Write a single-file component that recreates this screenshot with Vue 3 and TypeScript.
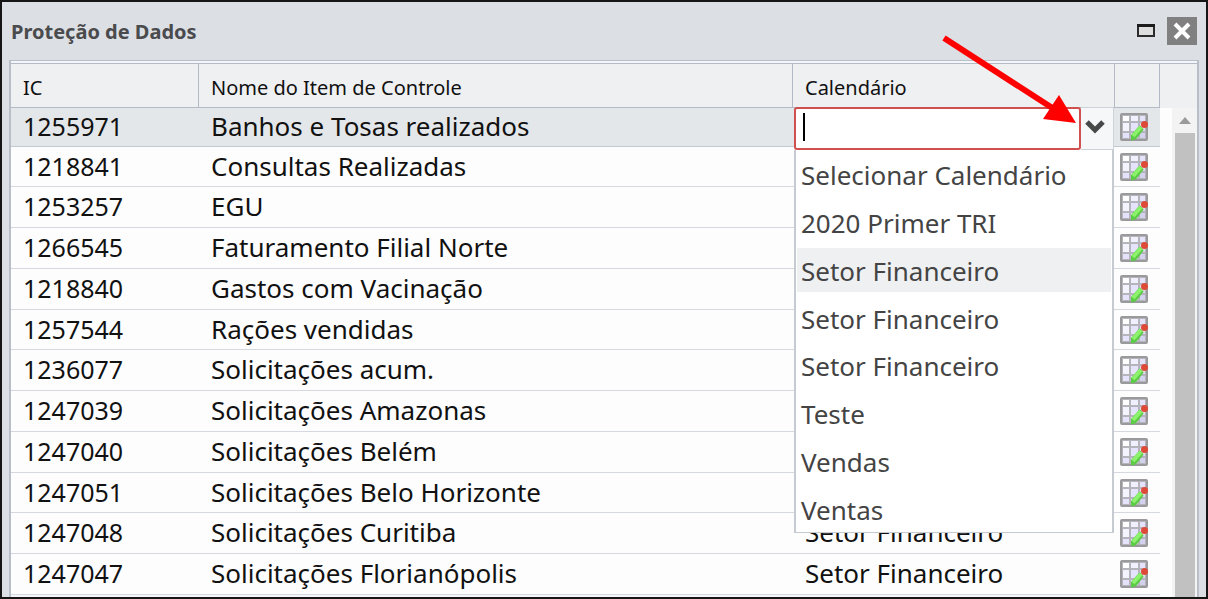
<script setup lang="ts">
import { ref } from 'vue'

interface Item {
  id: string
  name: string
  calendar: string
}

const items: Item[] = [
  { id: '1255971', name: 'Banhos e Tosas realizados', calendar: '' },
  { id: '1218841', name: 'Consultas Realizadas', calendar: '' },
  { id: '1253257', name: 'EGU', calendar: '' },
  { id: '1266545', name: 'Faturamento Filial Norte', calendar: '' },
  { id: '1218840', name: 'Gastos com Vacinação', calendar: '' },
  { id: '1257544', name: 'Rações vendidas', calendar: '' },
  { id: '1236077', name: 'Solicitações acum.', calendar: '' },
  { id: '1247039', name: 'Solicitações Amazonas', calendar: '' },
  { id: '1247040', name: 'Solicitações Belém', calendar: '' },
  { id: '1247051', name: 'Solicitações Belo Horizonte', calendar: '' },
  { id: '1247048', name: 'Solicitações Curitiba', calendar: 'Setor Financeiro' },
  { id: '1247047', name: 'Solicitações Florianópolis', calendar: 'Setor Financeiro' },
]

const options: string[] = [
  'Selecionar Calendário',
  '2020 Primer TRI',
  'Setor Financeiro',
  'Setor Financeiro',
  'Setor Financeiro',
  'Teste',
  'Vendas',
  'Ventas',
]

const query = ref('')
const active = ref(2)
const open = ref(true)

function choose(index: number) {
  query.value = options[index]
  open.value = false
}
</script>

<template>
  <main class="window">
    <header class="titlebar">
      <h1>Proteção de Dados</h1>
      <button class="maximize" type="button" aria-label="Maximizar">
        <svg width="20" height="16" viewBox="0 0 20 16">
          <rect x="2" y="2" width="16" height="11" fill="#dedede" stroke="#2b2b2b" stroke-width="2" />
          <path d="M1 2.5H19" stroke="#1c1c1c" stroke-width="3" />
        </svg>
      </button>
      <button class="close" type="button" aria-label="Fechar">
        <svg width="20" height="20" viewBox="0 0 20 20">
          <path d="M3 3L17 17M17 3L3 17" stroke="#fff" stroke-width="4" />
        </svg>
      </button>
    </header>

    <section class="panel">
      <table>
        <colgroup>
          <col class="col-id" />
          <col />
          <col class="col-calendar" />
          <col class="col-action" />
        </colgroup>
        <thead>
          <tr>
            <th scope="col">IC</th>
            <th scope="col">Nome do Item de Controle</th>
            <th scope="col">Calendário</th>
            <th scope="col"></th>
          </tr>
        </thead>
        <tbody>
          <tr v-for="(item, i) in items" :key="item.id" :class="{ selected: i === 0 }">
            <td class="id">{{ item.id }}</td>
            <td>{{ item.name }}</td>
            <td class="calendar">
              <div v-if="i === 0" class="combo">
                <div class="field">
                  <input
                    v-model="query"
                    type="text"
                    role="combobox"
                    aria-label="Calendário"
                    aria-controls="calendar-options"
                    :aria-expanded="open"
                  />
                  <span v-if="!query" class="caret"></span>
                  <button type="button" aria-label="Abrir lista" @click="open = !open">
                    <svg width="22" height="18" viewBox="0 0 22 18">
                      <path d="M3 4L11 12L19 4" fill="none" stroke="#484848" stroke-width="5" />
                    </svg>
                  </button>
                </div>
                <ul v-if="open" id="calendar-options" role="listbox" aria-label="Calendários">
                  <li
                    v-for="(option, n) in options"
                    :key="n"
                    role="option"
                    :aria-selected="n === active"
                    :class="{ active: n === active }"
                    @mouseenter="active = n"
                    @click="choose(n)"
                  >
                    {{ option }}
                  </li>
                </ul>
              </div>
              <template v-else>{{ item.calendar }}</template>
            </td>
            <td class="action">
              <button type="button" :aria-label="'Editar ' + item.name">
                <svg width="28" height="28" viewBox="0 0 28 28">
                  <rect x="1" y="1" width="26" height="26" rx="1" fill="#b4b4ba" stroke="#9a9a9c" stroke-width="2" />
                  <g fill="#e4e3fb">
                    <rect x="3" y="3" width="6" height="5" fill="#fff" />
                    <rect x="11" y="3" width="7" height="5" fill="#f0f0ff" />
                    <rect x="20" y="3" width="5" height="5" />
                    <rect x="3" y="10" width="6" height="8" fill="#f4f4ff" />
                    <rect x="11" y="10" width="7" height="8" />
                    <rect x="20" y="10" width="5" height="8" fill="#dad9f4" />
                    <rect x="3" y="20" width="6" height="5" />
                    <rect x="11" y="20" width="7" height="5" />
                    <rect x="20" y="20" width="5" height="5" fill="#d3d2ee" />
                  </g>
                  <path d="M11 27L11 22L19 13Q22 12 24 16L17 25Q14 28 11 27Z" fill="#5ccb45" />
                  <path d="M13 23L21 14" stroke="#8cf26c" stroke-width="4" />
                  <path d="M20 12L22 10L26 14L24 17Z" fill="#e2e0dc" />
                  <circle cx="24.5" cy="11.5" r="3.5" fill="#de4a38" />
                </svg>
              </button>
            </td>
          </tr>
        </tbody>
      </table>
      <div class="side">
        <div class="side-head"></div>
        <div class="scrollbar">
          <svg width="12" height="8" viewBox="0 0 12 8"><path d="M0 7L6 0L12 7Z" fill="#9a9a9a" /></svg>
          <div class="thumb"></div>
        </div>
      </div>
    </section>

    <svg class="pointer" width="140" height="95" viewBox="0 0 140 95" aria-hidden="true">
      <path d="M5 8L118 81" stroke="#f00" stroke-width="6" />
      <path d="M137 93L120 65L104 89Z" fill="#f00" />
    </svg>
  </main>
</template>

<style>
html,
body {
  margin: 0;
  background: #dcdfe4;
}
</style>

<style scoped>
* {
  box-sizing: border-box;
}

.window {
  position: relative;
  display: flex;
  flex-direction: column;
  height: 100vh;
  min-height: 520px;
  overflow: hidden;
  padding: 0 7px;
  border: 2px solid #161616;
  background: #dcdfe4;
  color: #111;
  font-family: "Noto Sans", "Open Sans", sans-serif;
}

button {
  display: flex;
  align-items: center;
  justify-content: center;
  padding: 0;
  border: 0;
  background: none;
}

.titlebar {
  display: flex;
  flex: 0 0 58px;
  align-items: center;
  padding: 0 2px;
}

h1 {
  flex: 1;
  margin: 0;
  color: #4a4b4d;
  font-size: 20px;
  font-weight: 700;
}

.maximize {
  width: 24px;
  height: 28px;
  margin-right: 9px;
}

.close {
  width: 30px;
  height: 28px;
  background: #808080;
}

.panel {
  display: flex;
  flex: 1;
  min-height: 0;
  padding-top: 2px;
  border: 2px solid #b8bfc9;
  border-width: 1px 2px 0;
  background: #f4f6f9;
}

table {
  flex: 1;
  width: 100%;
  height: calc(100% - 2px);
  border-spacing: 0;
  border-collapse: separate;
  table-layout: fixed;
  background: #fdfdfd;
}

.col-id {
  width: 188px;
}

.col-calendar {
  width: 322px;
}

.col-action {
  width: 45px;
}

th {
  height: 45px;
  padding: 4px 12px 0;
  border: 1px solid #b4bbc6;
  border-width: 1px 1px 1px 0;
  background: #eff0f2;
  font-size: 20px;
  font-weight: 400;
  line-height: 24px;
  text-align: left;
}

td {
  height: 40px;
  padding: 0 12px 2px;
  border-bottom: 1px solid #d5d9df;
  font-size: 26px;
  line-height: 32px;
  white-space: nowrap;
}

td.id {
  font-size: 25px;
}

.selected td {
  height: 38px;
  border-color: #c3c9d1;
  background: #e4e7ea;
}

td.calendar {
  position: relative;
}

td.action {
  padding: 0 5px;
}

.combo {
  position: absolute;
  z-index: 1;
  top: -1px;
  right: 1px;
  left: 1px;
}

.field {
  position: relative;
  display: flex;
  height: 43px;
}

input {
  flex: 1;
  min-width: 0;
  padding: 0 8px;
  border: 2px solid #d0504f;
  border-radius: 3px;
  outline: 0;
  background: #fff;
  font: inherit;
  caret-color: transparent;
}

.caret {
  position: absolute;
  top: 6px;
  left: 9px;
  width: 2px;
  height: 28px;
  background: #000;
}

.field button {
  width: 33px;
  padding: 0 5px 3px 0;
  border: 1px solid #cdd2d9;
  border-left: 0;
  background: #f5f7f8;
}

ul {
  display: grid;
  grid-auto-rows: 1fr;
  row-gap: 3px;
  height: 383px;
  margin: 0;
  padding: 2px 1px 1px;
  border: 2px solid #c6cbd2;
  border-width: 0 2px 1px;
  background: #fff;
  list-style: none;
}

li {
  display: flex;
  align-items: center;
  padding: 2px 4px 0;
  color: #444;
}

li.active {
  background: #eff0f2;
}

.side {
  display: flex;
  flex: 0 0 37px;
  flex-direction: column;
  background: #fdfdfd;
}

.side-head {
  flex: 0 0 45px;
  border-top: 1px solid #b4bbc6;
  background: #eff0f2;
}

.scrollbar {
  display: flex;
  flex: 1;
  flex-direction: column;
  align-items: center;
  gap: 8px;
  width: 25px;
  margin-left: auto;
  padding-top: 9px;
  background: #f3f3f4;
}

.thumb {
  flex: 1;
  width: 20px;
  background: #c1c1c1;
}

.pointer {
  position: absolute;
  top: 28px;
  right: 127px;
  pointer-events: none;
  z-index: 2;
}
</style>
